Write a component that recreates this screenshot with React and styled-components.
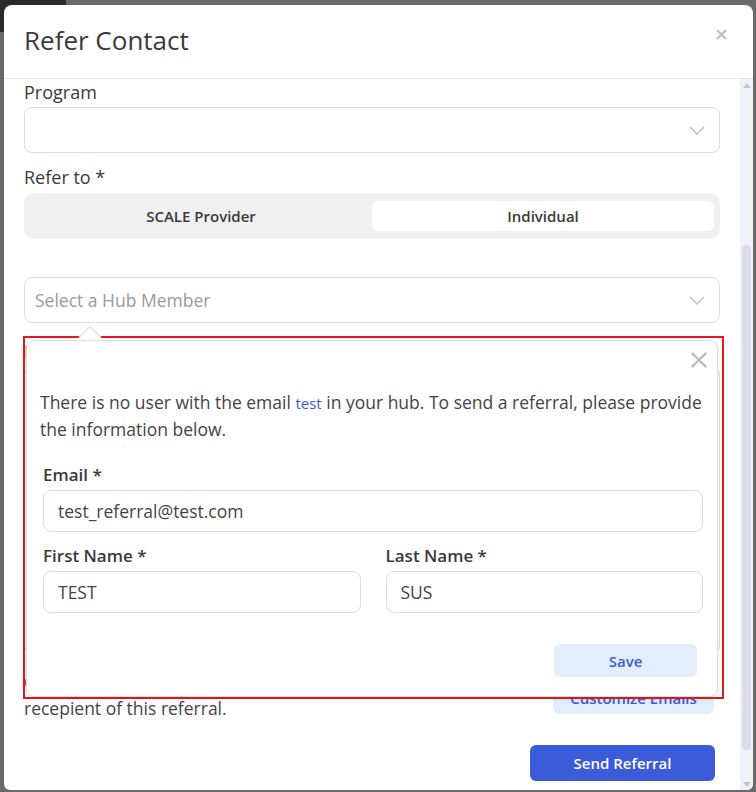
import React from 'react';
import styled, { createGlobalStyle } from 'styled-components';

const GlobalStyle = createGlobalStyle`
  html, body {
    margin: 0;
    padding: 0;
    height: 100%;
    font-family: 'Open Sans', 'Noto Sans', sans-serif;
    color: #444;
  }
  * { box-sizing: border-box; }
`;

const Backdrop = styled.div`
  position: relative;
  width: 756px;
  height: 792px;
  background: #6a6a6a;
  overflow: hidden;
  padding: 5px 3px 2px 4px;
`;

const PageHint = styled.div`
  position: absolute;
  left: 0;
  top: 0;
  width: 66px;
  height: 32px;
  background: #2a2a2a;
`;

const Modal = styled.div`
  position: relative;
  height: 785px;
  background: #fff;
  border-radius: 8px 8px 6px 6px;
  display: flex;
  flex-direction: column;
  overflow: hidden;
`;

const Header = styled.div`
  height: 74px;
  flex-shrink: 0;
  display: flex;
  align-items: center;
  justify-content: space-between;
  padding: 0 26px 4px 20px;
  border-bottom: 1px solid #e6e6e6;
`;

const Title = styled.h2`
  margin: 0;
  font-size: 26px;
  font-weight: 500;
  color: #3a3a3a;
`;

const CloseButton = styled.button`
  border: none;
  background: none;
  padding: 0;
  display: flex;
  color: ${({ $tone }) => $tone || '#bdbdbd'};
  margin-bottom: ${({ $lift }) => $lift || 0}px;
  cursor: pointer;
`;

const BodyRow = styled.div`
  flex: 1;
  display: flex;
  min-height: 0;
`;

const Content = styled.div`
  flex: 1;
  position: relative;
  padding: 0 20px 0 20px;
  overflow: hidden;
`;

const Scrollbar = styled.div`
  width: 13px;
  background: #f1f1fa;
  position: relative;
  display: flex;
  flex-direction: column;
  align-items: center;
  justify-content: space-between;
  padding: 4px 0 3px;
`;

const Arrow = styled.div`
  width: 0;
  height: 0;
  border-left: 4px solid transparent;
  border-right: 4px solid transparent;
  ${({ $down }) => ($down ? 'border-top: 5px solid #c4c4cf;' : 'border-bottom: 5px solid #c4c4cf;')}
`;

const Thumb = styled.div`
  position: absolute;
  left: 2px;
  right: 2px;
  top: 166px;
  bottom: 40px;
  border-radius: 5px;
  background: #dcdce9;
`;

const Label = styled.div`
  font-size: 18px;
  line-height: 24px;
  font-weight: ${({ $bold }) => ($bold ? 600 : 500)};
  color: #3a3a3a;
  margin-top: ${({ $mt }) => $mt || 0}px;
  margin-bottom: ${({ $mb }) => $mb ?? 3}px;
`;

const FormLabel = styled(Label)`
  font-size: 17px;
`;

const Select = styled.div`
  height: 46px;
  border: 1px solid #dcdcdc;
  border-radius: 8px;
  display: flex;
  align-items: center;
  justify-content: space-between;
  padding: 0 14px 0 10px;
  font-size: 17.5px;
  color: #9a9a9a;
  margin-top: ${({ $mt }) => $mt || 0}px;
`;

const Segmented = styled.div`
  height: 46px;
  background: #f0f0f0;
  border-radius: 10px;
  padding: 8px 6px;
  display: flex;
  margin-top: 4px;
`;

const Segment = styled.div`
  flex: 1;
  display: flex;
  align-items: center;
  justify-content: center;
  border-radius: 6px;
  font-size: 15px;
  font-weight: 600;
  color: #3a3a3a;
  background: ${({ $active }) => ($active ? '#fff' : 'transparent')};
`;

const TextArea = styled.div`
  height: 286px;
  border: 1px solid #dcdcdc;
  border-radius: 8px;
`;

const EmailsRow = styled.div`
  display: flex;
  justify-content: space-between;
  align-items: flex-end;
  margin-top: 16px;
  padding-right: 6px;
`;

const Note = styled.p`
  margin: 0;
  font-size: 17.5px;
  line-height: 26px;
  color: #444;
`;

const SoftButton = styled.button`
  border: none;
  border-radius: 6px;
  background: #e3edfd;
  color: #3c5bd8;
  font-family: inherit;
  font-size: 15px;
  font-weight: 600;
  height: 33px;
  width: ${({ $w }) => $w}px;
  margin-bottom: ${({ $mb }) => $mb || 0}px;
  flex-shrink: 0;
`;

const Footer = styled.div`
  display: flex;
  justify-content: flex-end;
  padding: 24px 5px 0 0;
`;

const PrimaryButton = styled.button`
  border: none;
  border-radius: 6px;
  background: #3c5bd8;
  color: #fff;
  font-family: inherit;
  font-size: 15px;
  font-weight: 600;
  height: 36px;
  width: 185px;
`;

const Highlight = styled.div`
  position: absolute;
  left: 19px;
  top: 257px;
  width: 701px;
  height: 363px;
  border: 2px solid #e3191e;
  padding: 2px 4px 0 1px;
`;

const Caret = styled.div`
  position: absolute;
  left: 57px;
  top: -9px;
  width: 16px;
  height: 16px;
  background: #fff;
  border-left: 1px solid #dcdcdc;
  border-top: 1px solid #dcdcdc;
  transform: rotate(45deg);
`;

const Popover = styled.div`
  position: relative;
  height: 100%;
  background: #fff;
  border: 1px solid #dedede;
  border-radius: 8px;
  box-shadow: 0 2px 6px rgba(0, 0, 0, 0.08);
  padding: 10px 14px 0 13px;
`;

const PopoverTop = styled.div`
  display: flex;
  justify-content: flex-end;
  margin-right: -5px;
`;

const Message = styled.p`
  margin: 20px 0 0;
  font-size: 17.5px;
  line-height: 26px;
  color: #444;
`;

const Highlighted = styled.span`
  color: #3c5bd8;
  font-size: 15px;
`;

const Form = styled.div`
  padding: 0 0 0 3px;
  margin-top: 21px;
`;

const FieldGrid = styled.div`
  display: grid;
  grid-template-columns: 1fr 1fr;
  column-gap: 25px;
  margin-top: 12px;
`;

const Input = styled.div`
  height: 42px;
  border: 1px solid #dcdcdc;
  border-radius: 8px;
  display: flex;
  align-items: center;
  padding: 0 14px;
  font-size: 17.5px;
  color: #444;
`;

const SaveRow = styled.div`
  display: flex;
  justify-content: flex-end;
  margin-top: 31px;
  padding-right: 6px;
`;

const Chevron = () => (
  <svg width="16" height="9" viewBox="0 0 16 9" fill="none">
    <path d="M1 1l7 7 7-7" stroke="#bdbdbd" strokeWidth="1.4" />
  </svg>
);

const Cross = ({ size, stroke }) => (
  <svg width={size} height={size} viewBox="0 0 10 10" fill="none">
    <path d="M1 1l8 8M9 1l-8 8" stroke="currentColor" strokeWidth={stroke} />
  </svg>
);

const App = () => (
  <>
    <GlobalStyle />
    <Backdrop>
      <PageHint />
      <Modal>
        <Header>
          <Title>Refer Contact</Title>
          <CloseButton $tone="#c2c2c2" $lift={10}>
            <Cross size={11} stroke={2} />
          </CloseButton>
        </Header>
        <BodyRow>
          <Content>
            <Label $mt={1}>Program</Label>
            <Select>
              <span />
              <Chevron />
            </Select>
            <Label $mt={12} $mb={4}>Refer to *</Label>
            <Segmented>
              <Segment>SCALE Provider</Segment>
              <Segment $active>Individual</Segment>
            </Segmented>
            <Select $mt={38}>
              <span>Select a Hub Member</span>
              <Chevron />
            </Select>
            <Label $mt={17}>Message</Label>
            <TextArea />
            <EmailsRow>
              <Note>
                Customize the emails that will be sent to the
                <br />
                recepient of this referral.
              </Note>
              <SoftButton $w={161} $mb={7}>Customize Emails</SoftButton>
            </EmailsRow>
            <Footer>
              <PrimaryButton>Send Referral</PrimaryButton>
            </Footer>

            <Highlight>
              <Caret />
              <Popover>
                <PopoverTop>
                  <CloseButton>
                    <Cross size={18} stroke={1.3} />
                  </CloseButton>
                </PopoverTop>
                <Message>
                  There is no user with the email <Highlighted>test</Highlighted> in your hub. To send a referral, please provide the information below.
                </Message>
                <Form>
                  <FormLabel $bold>Email *</FormLabel>
                  <Input>test_referral@test.com</Input>
                  <FieldGrid>
                    <div>
                      <FormLabel $bold>First Name *</FormLabel>
                      <Input>TEST</Input>
                    </div>
                    <div>
                      <FormLabel $bold>Last Name *</FormLabel>
                      <Input>SUS</Input>
                    </div>
                  </FieldGrid>
                  <SaveRow>
                    <SoftButton $w={143}>Save</SoftButton>
                  </SaveRow>
                </Form>
              </Popover>
            </Highlight>
          </Content>
          <Scrollbar>
            <Arrow />
            <Thumb />
            <Arrow $down />
          </Scrollbar>
        </BodyRow>
      </Modal>
    </Backdrop>
  </>
);

export default App;
